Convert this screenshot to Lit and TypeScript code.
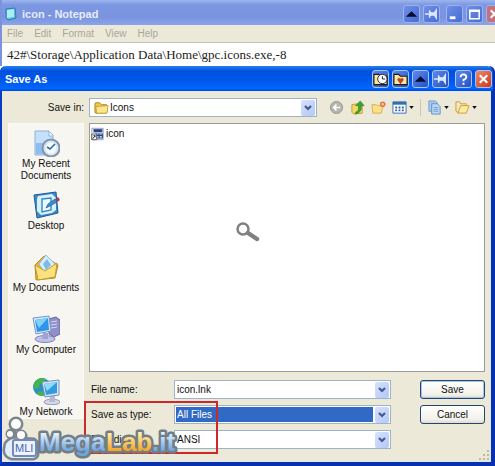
import { LitElement, html, css, svg } from "lit";
import { customElement } from "lit/decorators.js";

const up = svg`<path d="M2 11 8 5l6 6z" fill="#050a30"/>`;
const pin = svg`<path d="M1 8h5M6 4v8M6 6l2 1h3l2-3v8l-2-3H8l-2 1" stroke="#dfe9ff" stroke-width="1.6" fill="#cfdcff"/>`;
const close = svg`<path d="m4 4 8 8m0-8-8 8" stroke="#fff" stroke-width="2.2"/>`;
const arrow = html`<svg class="caret" viewBox="0 0 6 4"><path d="M0 0h6L3 4z" fill="#111"/></svg>`;
const chevron = html`<svg viewBox="0 0 14 16"><path d="m4 6 3 3 3-3" fill="none" stroke="#40598f" stroke-width="2.2"/></svg>`;
const glyph = (body: unknown) => html`<svg viewBox="0 0 16 16" aria-hidden="true">${body}</svg>`;
const folder = svg`<path d="M1 4q0-1 1-1h4l2 2h5q1 0 1 1v7q0 1-1 1H2q-1 0-1-1z" fill="#f0c84c" stroke="#a98425"/><path d="M2 7 15 6l-1 7q0 1-1 1H3z" fill="#fde68a" stroke="#b88f2d" stroke-width=".7"/>`;
const titleFolder = svg`<path d="M1 3h5l2 2h7v9H1z" fill="#f9e9a0" stroke="#1c1c1c" stroke-width="1.2"/>`;

const places = [
  { label: "My Recent Documents", icon: svg`
    <path d="M3 2h14l4 4v20H3z" fill="#c4e0fa" stroke="#8fb0d6"/><path d="M4 14h10v11H4z" fill="#8dbcf0"/><path d="M17 2v5h4" fill="#fff" stroke="#8fb0d6"/>
    <circle cx="19" cy="19" r="8.5" fill="#d9e6f2" stroke="#7f95ad" stroke-width="2"/><circle cx="19" cy="19" r="5.5" fill="#f7fbff"/>
    <path d="m15 18 3 2 5-5" fill="none" stroke="#2d6da8" stroke-width="1.6"/>` },
  { label: "Desktop", icon: svg`
    <path d="m2 4 22-3 2 21-21 5z" fill="#3b8ac9" stroke="#1c5d96"/><path d="m6 5 14-2 4 4v12l-4 3-11 2-4-4V8z" fill="#d8f1fc"/>
    <path d="m10 8 9-1v12l-9 2z" fill="#e9fbff" stroke="#318ac4" stroke-width="1.4"/><path d="m14 17 2-4 7-5 2 3-7 4z" fill="#3f8ed0" stroke="#215d98" stroke-width=".7"/><path d="m23 8 3-2 2 3-3 2z" fill="#9c4444"/>` },
  { label: "My Documents", icon: svg`
    <path d="m3 12 9-9 14 9-3 13-19 2z" fill="#e4b63d" stroke="#b68b25"/><path d="m7 11 7-9 9 9-9 11z" fill="#d5edfc" stroke="#93b9d4"/><path d="m11 11 4-5 4 6-5 5z" fill="#7bbbe9"/>
    <path d="m3 12 10 6 12-8-2 14-17 3z" fill="#fbe27c" stroke="#c69a2e"/>` },
  { label: "My Computer", icon: svg`
    <path d="m17 4 7-2 4 3v14l-6 3-5-3z" fill="#8f8fca" stroke="#66659f"/><path d="m19 7 6-1m-6 4 6-1m-6 4 6-1" stroke="#d8d9f5"/>
    <ellipse cx="13" cy="24" rx="10" ry="3.5" fill="#bfc2e5" stroke="#8385ba"/><path d="M11 18h5v6h-6z" fill="#a0a3d2"/>
    <path d="m1 3 16-2 2 15-15 3z" fill="#d9e7fb" stroke="#7895cb"/><path d="m3 5 13-2 1 12-12 2z" fill="#2e95eb"/><path d="m3 5 13-2-9 10z" fill="#7ed1fb"/>` },
  { label: "My Network", icon: svg`
    <circle cx="10" cy="10" r="9" fill="#2d8dcf"/><path d="M2 6q5-7 12-4l-2 4-4 1-1 4-5 1zm4 8 6 1 1 3q-5 2-8-1z" fill="#43b54a"/>
    <ellipse cx="20" cy="25" rx="8" ry="2.8" fill="#d3d7e8" stroke="#9499b8"/><path d="M18 18h5v7h-6z" fill="#b4b9d6"/>
    <path d="m10 5 17-2v15l-14 2z" fill="#d6e6f5" stroke="#7794ba"/><path d="m12 7 13-2v11l-11 2z" fill="#329bdd"/><path d="m12 7 13-2-10 9z" fill="#8cdcf8"/>` },
];

@customElement("app-root")
export class AppRoot extends LitElement {
  static styles = css`
    :host { display: flex; flex-direction: column; position: relative; min-height: 100vh; overflow: hidden; background: #fff;
      font: 10px/12px "Liberation Sans", Arial, sans-serif; color: #111; }
    * { box-sizing: border-box; }
    button, input, select { font: inherit; color: inherit; margin: 0; padding: 0; border: 0; background: none; }
    svg { display: block; }
    h1 { margin: 0 auto 0 0; font-size: 11px; line-height: 16px; color: #fff; white-space: nowrap; }
    .bar { display: flex; align-items: center; gap: 3px; }
    .notepad { border-left: 2px solid #7b93df; }
    .notepad .bar { height: 25px; padding: 3px 0 0 3px; overflow: hidden; background: linear-gradient(#9db6ef, #7c97e1 20%, #7b94df 70%, #8aa5ea); }
    .notepad h1 { color: #e6edfc; padding-left: 2px; }
    .appicon { width: 12px; height: 14px; }
    .cap { flex: none; width: 17px; height: 18px; border: 1px solid #a9c2f8; border-radius: 3px; background: linear-gradient(135deg, #5c8bea, #2450c4); }
    .cap svg { width: 15px; height: 16px; }
    .notepad .cap { border-color: #9eb2ed; background: linear-gradient(135deg, #6f90e6, #466bd3); }
    .space { margin-left: 3px; }
    .cap.red { background: linear-gradient(135deg, #ee8b6c, #c9381a); }
    .notepad .cap.red { background: #c6707e; margin-right: -8px; }
    .menu { display: flex; gap: 11px; height: 18px; padding: 3px 5px; background: #ece9d8; border-bottom: 1px solid #c5c3b8; }
    .menu button { color: #aaa798; }
    .text { display: block; width: 100%; height: 23px; padding: 0 5px; font: 13px/20px "Liberation Serif", serif; color: #222; }
    .dialog { flex: 1; display: flex; flex-direction: column; position: relative; border: solid #0a3bc4; border-width: 0 4px 4px 2px; border-right-color: #0831ae; border-bottom-color: #0831ae; border-radius: 6px 6px 0 0; background: #ece9d8; }
    .dialog > .bar { height: 25px; margin: 0 -2px; padding: 0 1px 0 5px; border-radius: 6px 6px 0 0; background: linear-gradient(#2a80ee, #0050dc 20%, #0058ee 60%, #0066ff 90%, #0048cf); }
    .body { flex: 1; display: grid; grid-template-columns: 76px 1fr; grid-template-rows: 19px 1fr; gap: 6px 5px; padding: 6px 5px 12px 6px; border: solid #dce8f6; border-width: 1px 1px 1px 0; }
    .lookin { text-align: right; align-self: center; }
    .tools { display: flex; align-items: center; }
    .combo { display: flex; align-items: center; height: 19px; padding: 1px; border: 1px solid #9db3c9; background: #fff; }
    .combo input, .combo select { flex: 1; min-width: 0; height: 15px; padding: 0 1px; outline: 0; appearance: none; border-radius: 0; }
    .combo select.hot { background: #316ac5; color: #fff; margin-right: 2px; }
    .drop { flex: none; width: 14px; height: 16px; border-radius: 2px; background: linear-gradient(135deg, #d6e2fd, #b3c8f6); pointer-events: none; }
    .folder { flex: 0 1 228px; padding-left: 4px; }
    .folder > svg { width: 15px; height: 15px; }
    .tool { display: flex; align-items: center; gap: 2px; flex: none; }
    .tool svg { width: 15px; height: 15px; }
    .tool .caret { width: 5px; height: 3px; }
    .set { display: flex; align-items: center; gap: 6px; margin-left: 12px; }
    .split { width: 1px; height: 17px; background: #cbc8b8; }
    .places { display: flex; flex-direction: column; height: 296px; padding-top: 5px; background: #f7f6f1; border: 1px solid #fbfaf7; overflow: hidden; }
    .place { display: flex; flex-direction: column; align-items: center; flex: none; gap: 1px; height: 62px; padding: 0 10px; white-space: normal; }
    .place.wide { padding: 0; }
    .place svg { width: 28px; height: 28px; flex: none; }
    .main { display: flex; flex-direction: column; gap: 8px; }
    .list { flex: 1; border: 1px solid #9a9c9c; background: #fff; padding: 2px 1px; }
    .file { display: flex; align-items: center; gap: 2px; height: 15px; }
    .file svg { width: 13px; height: 14px; }
    .form { display: grid; grid-template-columns: 85px minmax(0, 217px) 29px 65px; row-gap: 6px; justify-content: start; align-items: center; position: relative; }
    .form label { padding-left: 2px; }
    .ok { grid-column: 4; height: 19px; border: 1px solid #254571; border-radius: 3px; background: linear-gradient(#fff, #f2f1e9 80%, #dedacd); }
    .ok.default { box-shadow: inset 0 0 0 1px #a9c4ef; }
    .mark { position: absolute; left: -5px; top: 21px; width: 134px; height: 53px; border: 2px solid #cc2a2a; pointer-events: none; }
    .logo { position: absolute; left: 0; bottom: 0; width: 180px; height: 48px; pointer-events: none; }
    .grip { position: absolute; right: 2px; bottom: 2px; width: 10px; height: 10px; }
    .lens { position: absolute; left: 50%; top: 50%; width: 24px; height: 20px; margin: -11px 0 0 -12px; }
  `;

  private cap(label: string, body: unknown, extra = "") {
    return html`<button class="cap ${extra}" aria-label=${label}>${glyph(body)}</button>`;
  }

  render() {
    return html`
      <section class="notepad">
        <header class="bar">
          <svg class="appicon" viewBox="0 0 12 14"><path d="m1 2 9-1 1 10-8 2-2-2z" fill="#5bbfe0" stroke="#2a7fae"/><path d="m2 3 7-1v8l-7 1z" fill="#a9ecf5"/></svg>
          <h1>icon - Notepad</h1>
          ${this.cap("Roll up", up)}${this.cap("Pin", pin)}
          ${this.cap("Minimize", svg`<path d="M3 12h6" stroke="#fff" stroke-width="3"/>`, "space")}
          ${this.cap("Maximize", svg`<path d="M3 4h10v9H3zM3 5h10" fill="none" stroke="#fff" stroke-width="1.6"/>`)}
          ${this.cap("Close", close, "red")}
        </header>
        <nav class="menu">${["File", "Edit", "Format", "View", "Help"].map((m) => html`<button>${m}</button>`)}</nav>
        <input class="text" aria-label="Text" value="42#\\Storage\\Application Data\\Home\\gpc.icons.exe,-8" />
      </section>
      <section class="dialog">
        <header class="bar">
          <h1>Save As</h1>
          ${this.cap("Recent folders", svg`${titleFolder}<circle cx="10" cy="8" r="5" fill="#fff" stroke="#222"/><path d="M10 5v3h3" fill="none" stroke="#222"/>`)}
          ${this.cap("Favorite folders", svg`${titleFolder}<path d="M8 13 5 9q0-3 3-1 3-2 3 1z" fill="#d9401c" stroke="#7c2512" stroke-width=".5"/>`)}
          ${this.cap("Roll up", up)}${this.cap("Pin", pin)}
          ${this.cap("Help", svg`<path d="M5 6q0-3 3-3t3 3q0 1.500-3 3v1.500M8 12v2" fill="none" stroke="#fff" stroke-width="2"/>`, "space")}
          ${this.cap("Close", close, "red")}
        </header>
        <div class="body">
          <label class="lookin" for="dir">Save in:</label>
          <div class="tools">
            <div class="combo folder">${glyph(folder)}<select id="dir"><option>Icons</option></select><span class="drop">${chevron}</span></div>
            <div class="set">
              <button class="tool" aria-label="Back">${glyph(svg`<circle cx="8" cy="8" r="6.500" fill="#b5b5af" stroke="#96968f"/><path d="M12 8H5m3-3L5 8l3 3" fill="none" stroke="#fff" stroke-width="1.800"/>`)}</button>
              <button class="tool" aria-label="Up one level">${glyph(svg`<path d="m2 5 6-1 5 2v8l-9 1-2-2z" fill="#f6d66a" stroke="#c29a34"/><path d="M6 13q4-1 3-7H6l5-5 4 5h-3q1 7-6 9z" fill="#39a82f" stroke="#1e7a1c" stroke-width=".6"/>`)}</button>
              <button class="tool" aria-label="New folder">${glyph(svg`<path d="M1 5h5l1 1h6l-2 8H2z" fill="#fbe08a" stroke="#dcae4b"/><circle cx="12.500" cy="4.500" r="2.200" fill="#f6c9a0" stroke="#e0784c" stroke-width="1.600"/>`)}</button>
              <button class="tool" aria-label="Views">${glyph(svg`<path d="M1 2h14v12H1z" fill="#fff" stroke="#2e6fb5"/><path d="M1 2h14v3H1z" fill="#2e6fb5"/><path d="M3.500 8h9M3.500 11h9" stroke="#2f5f9c" stroke-width="2" stroke-dasharray="2 1.500"/>`)}${arrow}</button>
              <span class="split"></span>
              <button class="tool" aria-label="Copy">${glyph(svg`<path d="M2 1h7l2 2v9H2z" fill="#a9caf0" stroke="#6f9dd3"/><path d="M5 4h6l3 3v8H5z" fill="#bcd8f6" stroke="#5f8fc8"/><path d="M7 8h5m-5 2h5m-5 2h5" stroke="#6f9dd3"/>`)}${arrow}</button>
              <button class="tool" aria-label="Folders">${glyph(svg`<path d="M1 2h4l1 2h6v3M1 2v10l3 2" fill="#fbe596" stroke="#cf9c35"/><path d="M6 6h9l-3 8H3z" fill="#fdea9a" stroke="#cf9c35"/>`)}${arrow}</button>
            </div>
          </div>
          <nav class="places">
            ${places.map((p, i) => html`<button class="place ${i ? "wide" : ""}"><svg viewBox="0 0 28 28">${p.icon}</svg>${p.label}</button>`)}
          </nav>
          <div class="main">
            <div class="list">
              <button class="file">${glyph(svg`<path d="M1 1h14v14H1z" fill="#fff" stroke="#8890a8"/><path d="M3 2h11v4H3z" fill="#28428c"/><path d="M6 8h8v5H6zM6 10h8M10 8v5" fill="none" stroke="#28428c" stroke-width="1.300"/><path d="M1 8h6v7H1z" fill="#fff" stroke="#444"/><path d="m2 14 3-4m-2 0h2v2" fill="none" stroke="#111"/>`)}icon</button>
            </div>
            <div class="form">
              <label for="name">File name:</label>
              <div class="combo"><input id="name" value="icon.lnk" /><span class="drop">${chevron}</span></div>
              <button class="ok default">Save</button>
              <label for="type">Save as type:</label>
              <div class="combo"><select id="type" class="hot"><option>All Files</option></select><span class="drop">${chevron}</span></div>
              <button class="ok">Cancel</button>
              <label for="enc">Encoding:</label>
              <div class="combo"><select id="enc"><option>ANSI</option></select><span class="drop">${chevron}</span></div>
              <div class="mark"></div>
            </div>
          </div>
        </div>
        <svg class="grip" viewBox="0 0 10 10"><path d="M8 0h2v2H8zM4 4h2v2H4zm4 0h2v2H8zM0 8h2v2H0zm4 0h2v2H4zm4 0h2v2H8z" fill="#bdb9a6"/></svg>
        <svg class="logo" viewBox="0 0 180 48">
          <defs>
            <linearGradient id="b" x2="0" y2="1"><stop offset=".2" stop-color="#e6f3ff"/><stop offset=".8" stop-color="#6ba6e0"/></linearGradient>
            <linearGradient id="o" x2="0" y2="1"><stop offset=".2" stop-color="#fff0b0"/><stop offset=".8" stop-color="#f6a51c"/></linearGradient>
          </defs>
          <g fill="#7d868e" stroke="#7d868e" stroke-width="5">
            <circle cx="14" cy="10" r="5"/><circle cx="9" cy="20" r="3"/><circle cx="19" cy="22" r="4"/>
            <path d="M4 30q4-6 12-5l16 1q3 2 3 6v8q0 3-4 4H10q-7-2-7-8z"/>
          </g>
          <g fill="#fff">
            <circle cx="14" cy="10" r="5"/><circle cx="8" cy="20" r="3"/><circle cx="19" cy="21" r="4"/>
            <path d="M4 30q4-6 12-5l16 1q3 2 3 6v8q0 3-4 4H10q-7-2-7-8z" fill="#e4eefa"/>
          </g>
          <rect x="11" y="26" width="23" height="16" rx="2" fill="#eef4ff" stroke="#7189bb" stroke-width="2"/>
          <text x="13" y="38" font-family="Liberation Sans" font-size="11" fill="#4667ae">MLI</text>
          <g font-family="Liberation Sans" font-weight="bold" font-size="26" stroke="#737d86" stroke-width="5" stroke-linejoin="round" paint-order="stroke">
            <text x="37" y="37" fill="url(#b)">Mega</text>
            <text x="104" y="37" fill="url(#o)">Lab</text>
            <text x="150" y="37" fill="url(#b)">.it</text>
          </g>
        </svg>
      </section>
      <svg class="lens" viewBox="0 0 24 20"><circle cx="7" cy="7" r="5.500" fill="#fff" stroke="#808080" stroke-width="2.500"/><path d="m12 11 9 6" stroke="#808080" stroke-width="4.500" stroke-linecap="round"/></svg>
    `;
  }
}
